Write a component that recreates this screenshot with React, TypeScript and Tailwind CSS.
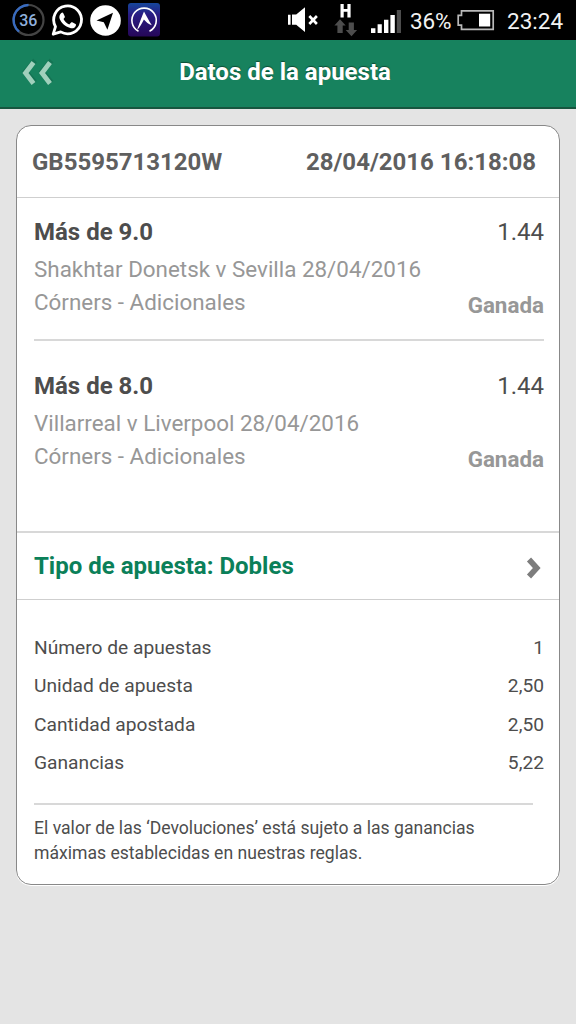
import React from "react";

type Pick = { title: string; odds: string; event: string; market: string; result: string };

const picks: Pick[] = [
  { title: "Más de 9.0", odds: "1.44", event: "Shakhtar Donetsk v Sevilla 28/04/2016", market: "Córners - Adicionales", result: "Ganada" },
  { title: "Más de 8.0", odds: "1.44", event: "Villarreal v Liverpool 28/04/2016", market: "Córners - Adicionales", result: "Ganada" },
];

const totals: [string, string][] = [
  ["Número de apuestas", "1"],
  ["Unidad de apuesta", "2,50"],
  ["Cantidad apostada", "2,50"],
  ["Ganancias", "5,22"],
];

function StatusIcons() {
  return (
    <svg width="410" height="40" viewBox="0 0 410 40" className="shrink-0">
      <defs>
        <linearGradient id="tile" x1="0" y1="0" x2="0" y2="1">
          <stop offset="0" stopColor="#16479b" />
          <stop offset="0.35" stopColor="#291c83" />
          <stop offset="1" stopColor="#260758" />
        </linearGradient>
      </defs>
      <circle cx="28.5" cy="20" r="15" fill="none" stroke="#444" strokeWidth="2.2" />
      <path d="M28.5 5A15 15 0 0 0 19 31.6" fill="none" stroke="#386bc0" strokeWidth="2.4" />
      <text x="28.3" y="26.2" textAnchor="middle" fontSize="16" fontWeight="500" fontFamily="Roboto, sans-serif" fill="#8fb0dc">36</text>
      <path d="M53.2 34.2L55.5 26.7A13.9 13.9 0 1 1 60.7 31.9Z" fill="none" stroke="#fff" strokeWidth="2.8" strokeLinejoin="round" />
      <path d="M62.3 13.1c.7-.7 1.6-.7 2 .1l1.5 3.4c.2.5 0 1-1.3 2.5 1.3 2.6 3.1 4.2 5.8 5.4l1.8-2c.4-.5.7-.4 1.2-.2l3.2 1.6c.6.3.6.6.4 1.5-.7 2.5-3.4 3.3-5.7 2.6-5.4-1.5-8.6-4.9-10.5-9-.9-2.2-.1-4.5 1.6-5.9z" fill="#fff" transform="translate(-1 0)" />
      <circle cx="105.5" cy="20.5" r="15.3" fill="#fff" />
      <path d="M96.5 20.4L113 12.8L107.4 29.7L103.8 22.2Z" fill="#000" />
      <rect x="128" y="3" width="32" height="33.5" rx="3" fill="url(#tile)" />
      <path d="M138.5 31.2A12.2 12.2 0 1 1 149.5 31.3" fill="none" stroke="#fff" strokeWidth="1.6" />
      <path d="M137 30C139.8 22 142 15.8 144 11.4C146 15 148.5 20 151.8 25.2C148.4 24.2 146.2 22 143.9 19.4C141.5 24 139.8 27.5 137 30Z" fill="#fff" />
      <path d="M288 14.8h2.6v10H288zM292 14.5h4.2L305 7.2V32l-8.8-7.3H292z" fill="#fff" />
      <path d="M309.3 16l7.6 8M316.9 16l-7.6 8" stroke="#fff" strokeWidth="2.6" />
      <path d="M340.5 4h3.2v5h3.7V4h3.2v13.5h-3.2v-5.7h-3.7v5.7h-3.2z" fill="#fff" />
      <path d="M340 19.2l5.7 6.3h-3V33h-5.3v-7.5h-3zM351.5 36.3l-5.8-6.3h3v-7.5h5.2V30h3.2z" fill="#4d4d4d" />
      <path d="M371 28.3h4.4V33H371zM377.6 24.3h4.2V33h-4.2zM384 19.7h4.4V33H384zM390.4 15h4.4v18h-4.4z" fill="#fff" />
      <path d="M396.8 10h4.2v23h-4.2z" fill="#4d4d4d" />
    </svg>
  );
}

function StatusBar() {
  return (
    <div className="flex h-10 items-center bg-black text-[22.5px] leading-10 text-[#f2f2f2]">
      <StatusIcons />
      <span className="w-[47px] whitespace-nowrap pt-px tracking-[-0.2px]">36%</span>
      <svg width="38" height="40" viewBox="457 0 38 40" className="shrink-0">
        <path d="M461.5 10.8h31.7v18.6h-31.7v-4.2h-3.3v-9.8h3.3z" fill="none" stroke="#b9b9b9" strokeWidth="1.7" />
        <rect x="479" y="13.7" width="11.2" height="12.8" fill="#fff" />
      </svg>
      <span className="ml-3 pt-px">23:24</span>
    </div>
  );
}

function PickRow({ pick }: { pick: Pick }) {
  return (
    <div className="h-[142px] pt-[18px]">
      <div className="flex justify-between text-[24px] leading-8 text-[#4d4d4d]">
        <span className="font-bold">{pick.title}</span>
        <span>{pick.odds}</span>
      </div>
      <div className="mt-[5px] flex justify-between text-[22.4px] leading-[33px] text-[#979797]">
        <div>
          <p>{pick.event}</p>
          <p>{pick.market}</p>
        </div>
        <span className="pt-[36px] font-bold">{pick.result}</span>
      </div>
    </div>
  );
}

export default function App() {
  return (
    <div className="min-h-screen w-[576px] bg-[#e4e4e4] font-['Roboto',sans-serif]">
      <StatusBar />
      <header className="grid h-[69px] grid-cols-[90px_1fr_96px] items-center border-b-2 border-[#17563f] bg-[#17825e]">
        <svg width="34" height="30" viewBox="0 0 34 30" className="ml-5 mt-[-1px]">
          <path d="M15 2.5L5.5 13.5L15 24.5M31.5 2.5L22 13.5L31.5 24.5" fill="none" stroke="#126047" strokeWidth="5" opacity="0.4" />
          <path d="M13.5 4.5L5.5 15L13.5 25.5M30 4.5L22 15L30 25.5" fill="none" stroke="#a0d0bc" strokeWidth="4.8" />
        </svg>
        <h1 className="pb-[3px] whitespace-nowrap text-center text-[24px] leading-8 font-bold text-white [text-shadow:0_-1px_1px_#0c4d36]">Datos de la apuesta</h1>
      </header>
      <main className="mx-4 mt-4 h-[760px] rounded-[15px] border-[1.5px] border-[#888] bg-white text-[#4d4d4d] shadow-[0_1px_0_#fff]">
        <div className="flex h-[72px] items-center justify-between border-b-[1.5px] border-[#cfcfcf] pr-[23px] pl-[15px] text-[24px] font-bold text-[#5f5f5f]">
          <span>GB5595713120W</span>
          <span>28/04/2016 16:18:08</span>
        </div>
        <section className="h-[335px] border-b-2 border-[#d8d8d8] px-[17px] pr-[15px]">
          <div className="h-[141px]"><PickRow pick={picks[0]} /></div>
          <div className="h-[13px] border-t-2 border-[#d8d8d8]" />
          <PickRow pick={picks[1]} />
        </section>
        <div className="flex h-[67px] items-center justify-between border-b border-[#cfcfcf] pr-[17px] pl-[17px] text-[24px] font-bold text-[#0b8059]">
          <span>Tipo de apuesta: Dobles</span>
          <svg width="16" height="22" viewBox="0 0 16 22" className="mt-1">
            <path d="M3 2.5L10.8 11L3 19.5" fill="none" stroke="#7d7d7d" strokeWidth="5.6" />
          </svg>
        </div>
        <dl className="pt-[29px] pr-[15px] pl-[17px] text-[19.2px] leading-[38.4px]">
          {totals.map(([label, value]) => (
            <div key={label} className="flex justify-between">
              <dt>{label}</dt>
              <dd>{value}</dd>
            </div>
          ))}
        </dl>
        <div className="mt-[20px] mr-[26px] ml-[17px] border-t-2 border-[#d8d8d8] pt-[11px] text-[17.6px] leading-[25.6px]">
          <p>El valor de las ‘Devoluciones’ está sujeto a las ganancias</p>
          <p>máximas establecidas en nuestras reglas.</p>
        </div>
      </main>
    </div>
  );
}
